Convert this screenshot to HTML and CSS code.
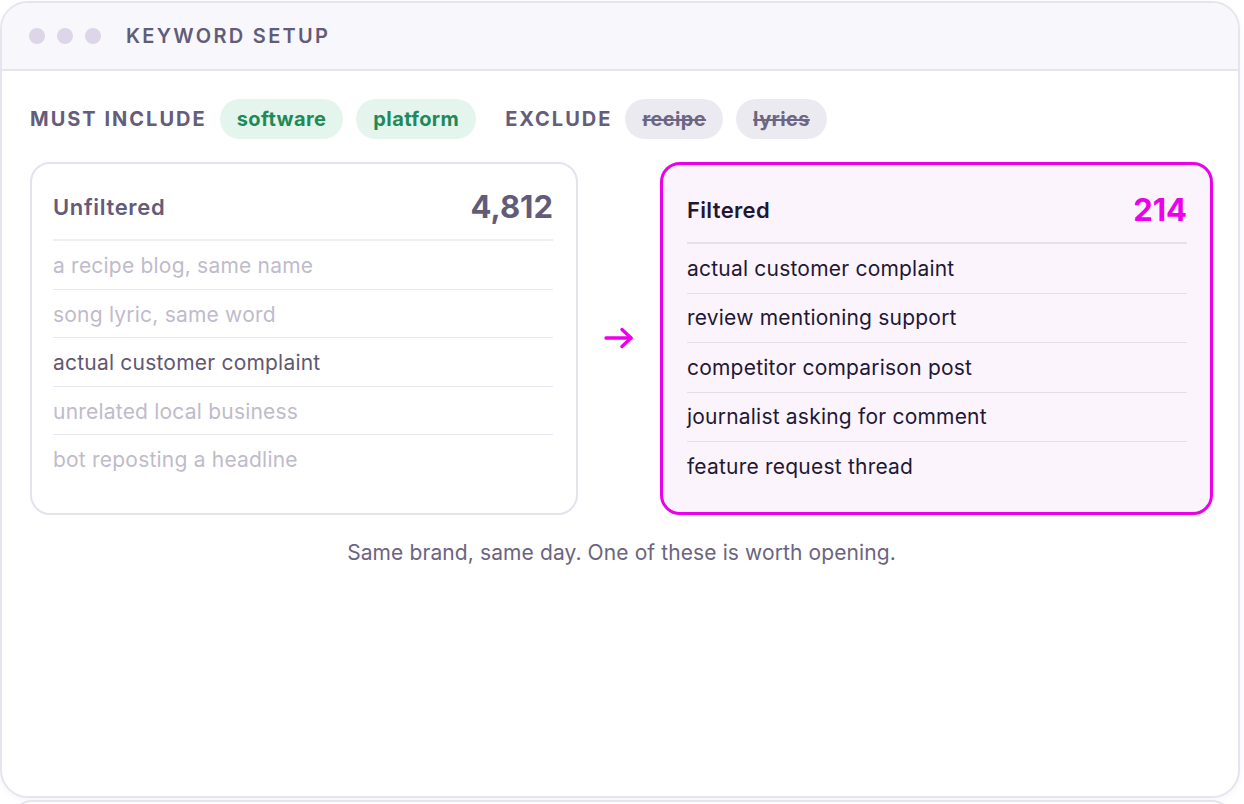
FILE: index.html
```html
<!DOCTYPE html>
<html lang="en">
<head>
    <meta charset="UTF-8">
    <meta name="viewport" content="width=device-width, initial-scale=1.0">
    <title>Keyword Setup</title>
    <link rel="stylesheet" href="styles.css">
</head>
<body>
    <div class="window">
        <header class="titlebar">
            <span class="dot"></span>
            <span class="dot"></span>
            <span class="dot"></span>
            <h1>KEYWORD SETUP</h1>
        </header>

        <main class="content">
            <div class="rules">
                <span class="rule-label">MUST INCLUDE</span>
                <span class="chip chip-include">software</span>
                <span class="chip chip-include">platform</span>
                <span class="rule-label rule-gap">EXCLUDE</span>
                <span class="chip chip-exclude">recipe</span>
                <span class="chip chip-exclude">lyrics</span>
            </div>

            <div class="compare">
                <section class="card">
                    <div class="card-head">
                        <h2>Unfiltered</h2>
                        <span class="count">4,812</span>
                    </div>
                    <ul class="mentions">
                        <li class="muted">a recipe blog, same name</li>
                        <li class="muted">song lyric, same word</li>
                        <li>actual customer complaint</li>
                        <li class="muted">unrelated local business</li>
                        <li class="muted">bot reposting a headline</li>
                    </ul>
                </section>

                <div class="arrow">
                    <svg width="32" height="24" viewBox="0 0 32 24" fill="none" stroke="#ec00ec" stroke-width="3.4" stroke-linecap="round" stroke-linejoin="round">
                        <path d="M3 12h25"/>
                        <path d="M19 3.5l9 8.5-9 8.5"/>
                    </svg>
                </div>

                <section class="card card-filtered">
                    <div class="card-head">
                        <h2>Filtered</h2>
                        <span class="count">214</span>
                    </div>
                    <ul class="mentions">
                        <li>actual customer complaint</li>
                        <li>review mentioning support</li>
                        <li>competitor comparison post</li>
                        <li>journalist asking for comment</li>
                        <li>feature request thread</li>
                    </ul>
                </section>
            </div>

            <p class="caption">Same brand, same day. One of these is worth opening.</p>
        </main>
    </div>

    <div class="window next"></div>
</body>
</html>
```

FILE: styles.css
```css
body {
    margin: 0;
    background: #ffffff;
    font-family: "Inter", "Noto Sans", sans-serif;
    color: #1f1835;
}

.window {
    box-sizing: border-box;
    width: 1240px;
    height: 797px;
    margin-top: 1px;
    background: #ffffff;
    border: 2px solid #e6e4ee;
    border-radius: 28px;
    overflow: hidden;
    box-shadow: 0 2px 6px rgba(90, 80, 140, 0.06);
}

.window.next {
    width: 1220px;
    height: 40px;
    margin: 2px 0 0 12px;
    box-shadow: none;
}

.titlebar {
    display: flex;
    align-items: center;
    height: 66px;
    padding-left: 27px;
    background: #f8f8fc;
    border-bottom: 2px solid #e6e4ee;
}

.dot {
    width: 16px;
    height: 16px;
    border-radius: 50%;
    background: #ddd6e9;
    margin-right: 12px;
}

.titlebar h1 {
    margin: 0 0 0 13px;
    font-size: 20px;
    font-weight: 600;
    letter-spacing: 0.115em;
    color: #625b7a;
}

.content {
    padding: 28px 25px 0 28px;
}

.rules {
    display: flex;
    align-items: center;
    gap: 13px;
}

.rule-label {
    font-size: 20px;
    font-weight: 700;
    letter-spacing: 0.1em;
    color: #645d7b;
}

.rule-gap {
    margin-left: 16px;
}

.chip {
    height: 40px;
    line-height: 40px;
    padding: 0 17px;
    border-radius: 20px;
    font-size: 20px;
    font-weight: 700;
    letter-spacing: 0.02em;
}

.chip-include {
    background: #e3f5ec;
    color: #1f8a58;
}

.chip-exclude {
    background: #ebeaf1;
    color: #6d6683;
    text-decoration: line-through;
}

.compare {
    display: grid;
    grid-template-columns: 548px 1fr 553px;
    margin-top: 23px;
}

.card {
    border: 2px solid #e4e2ec;
    border-radius: 20px;
    padding: 25px 23px 20px 21px;
    background: #ffffff;
}

.card-head {
    display: flex;
    align-items: center;
    justify-content: space-between;
    padding-bottom: 14px;
    border-bottom: 2px solid #efedf3;
}

.card-head h2 {
    margin: 0;
    font-size: 22px;
    font-weight: 600;
    letter-spacing: 0.03em;
    color: #625b7a;
}

.count {
    font-size: 31px;
    font-weight: 700;
    color: #625b7a;
    line-height: 36px;
}

.mentions {
    list-style: none;
    margin: 0;
    padding: 0;
}

.mentions li {
    font-size: 21px;
    line-height: 24px;
    letter-spacing: 0.01em;
    padding: 13px 0 10.5px;
    border-bottom: 1px solid #e9e7ef;
    color: #5f5873;
}

.mentions li:last-child {
    border-bottom: none;
}

.mentions li.muted {
    color: #bfbbcb;
}

.arrow {
    display: flex;
    align-items: center;
    justify-content: center;
}

.card-filtered {
    border: 3px solid #ec00ec;
    background: #fcf4fd;
    padding: 27px 23px 21px 24px;
}

.card-filtered .card-head h2 {
    color: #1f1835;
    letter-spacing: 0.015em;
}

.card-filtered .count {
    color: #ec00ec;
}

.card-filtered .card-head {
    border-bottom-color: #e4e1ea;
}

.card-filtered .mentions li {
    color: #1f1835;
    padding: 12.5px 0 12px;
    border-bottom-color: #e2dfe8;
}

.caption {
    margin: 25px 0 0;
    text-align: center;
    font-size: 21px;
    letter-spacing: 0.005em;
    color: #6b6480;
}
```
